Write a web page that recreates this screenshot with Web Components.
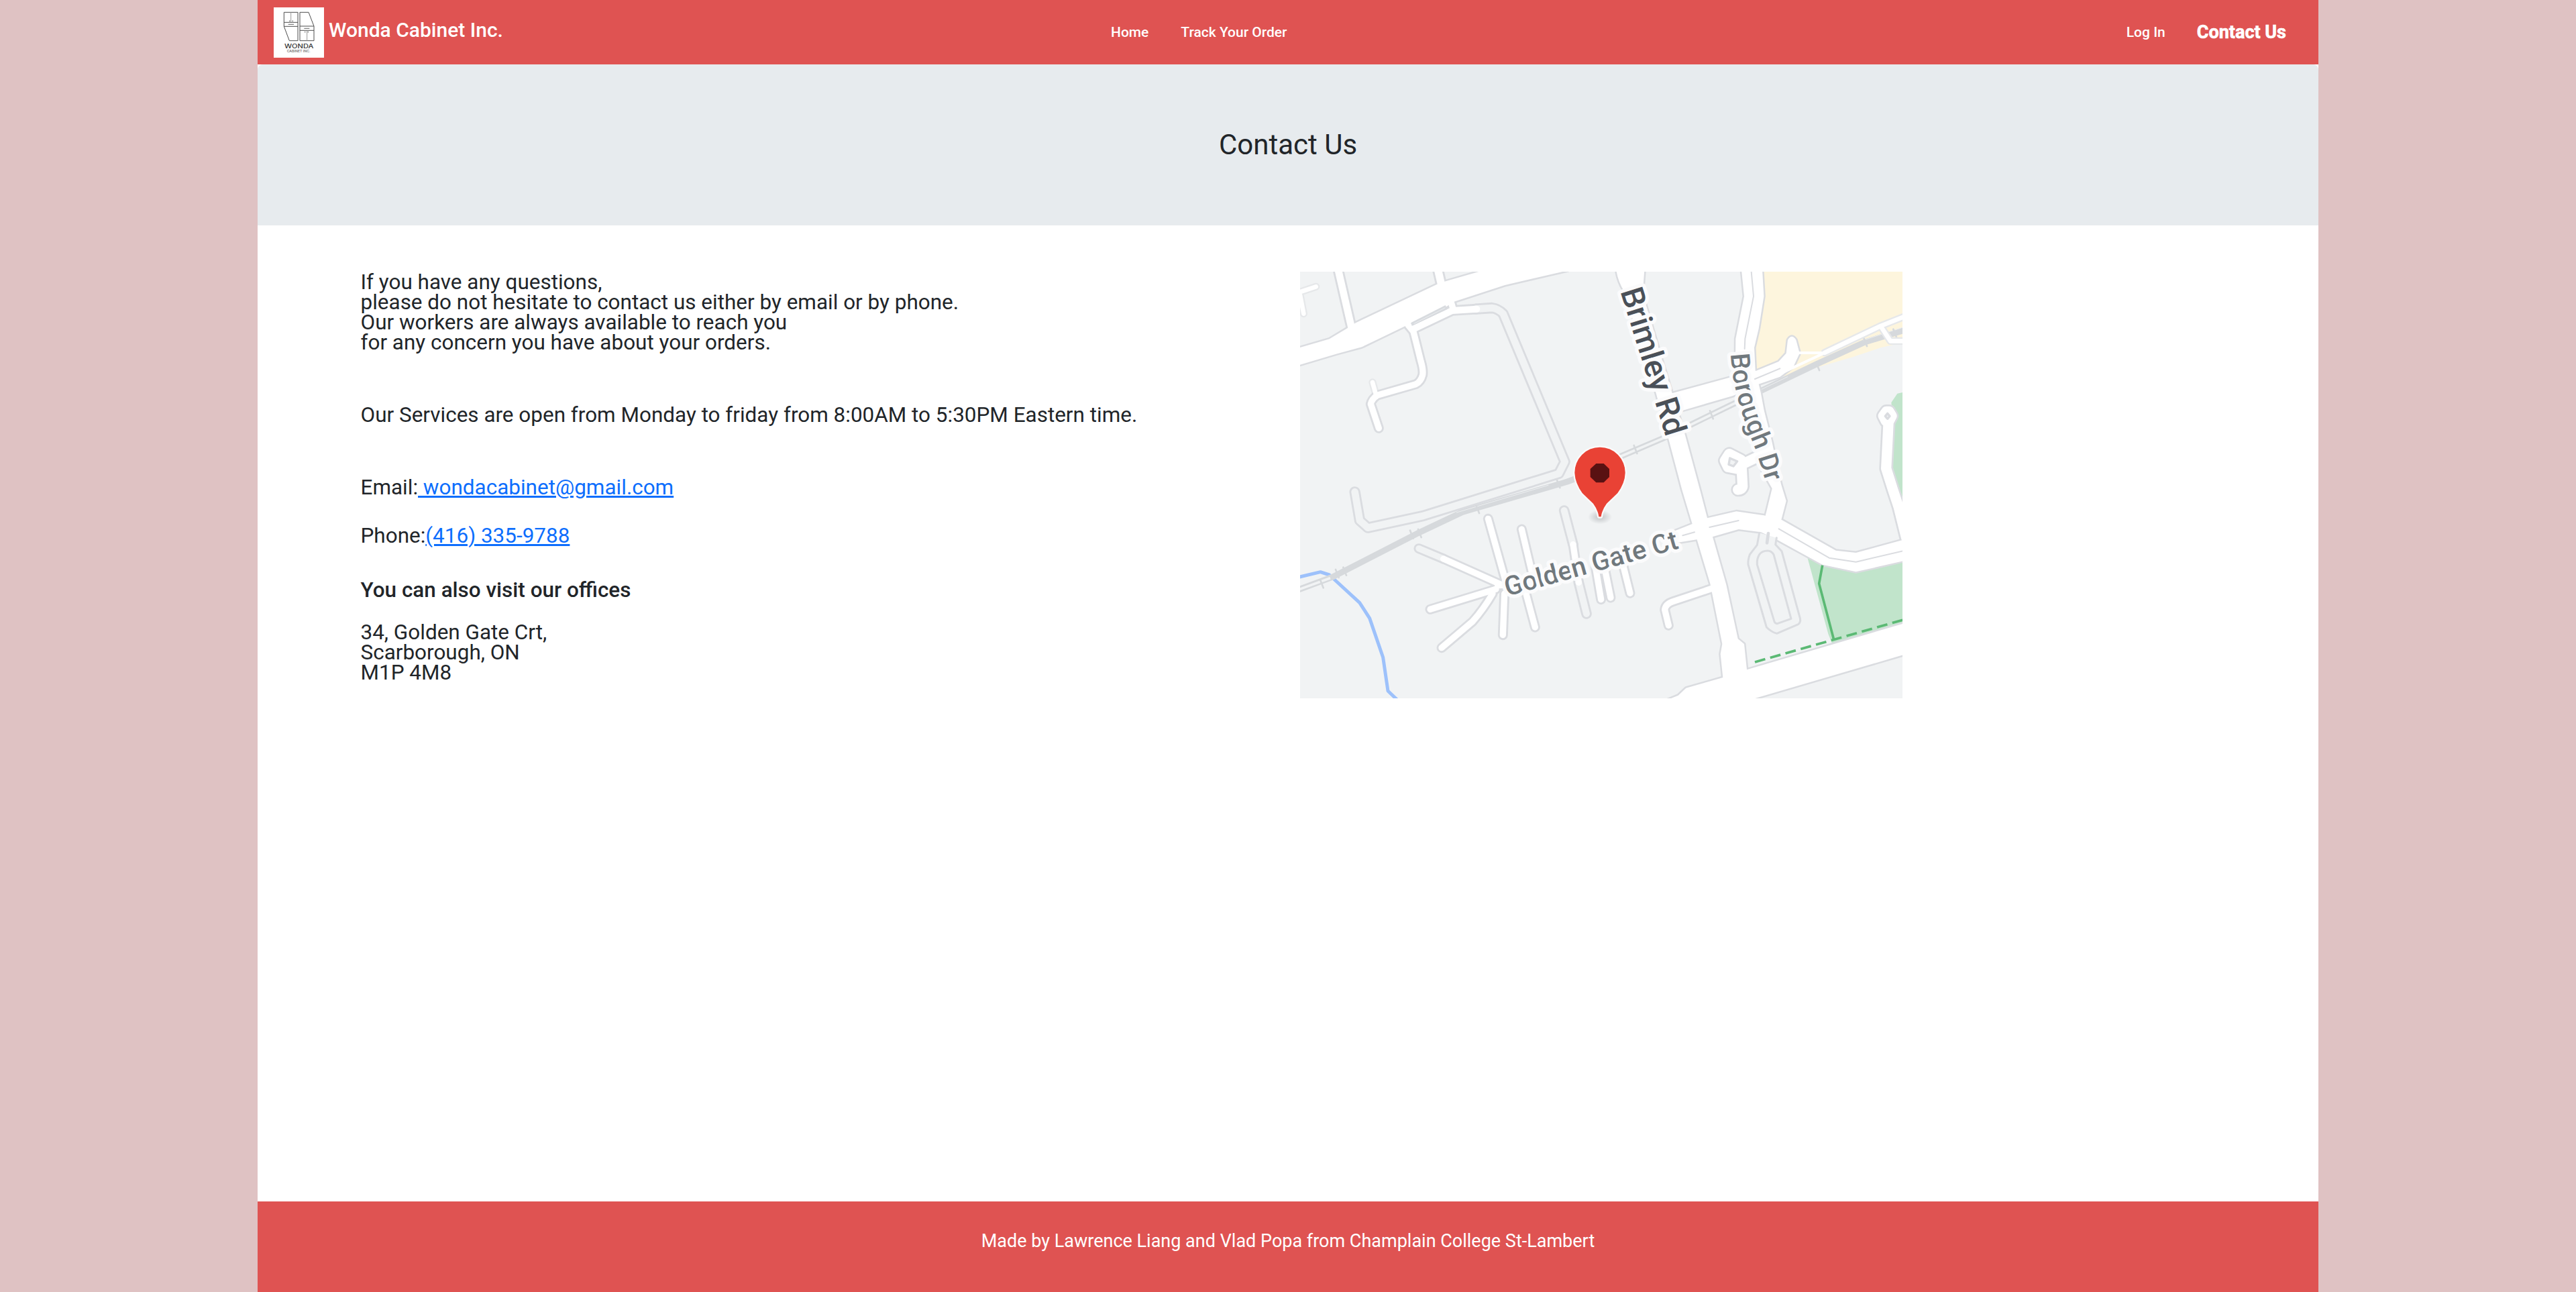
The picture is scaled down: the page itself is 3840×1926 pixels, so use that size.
<!DOCTYPE html>
<html lang="en">
<head>
<meta charset="utf-8">
<title>Contact Us - Wonda Cabinet Inc.</title>
<style>
html,body{margin:0;height:100%}
body{background:#dfc2c3;font-family:Roboto,sans-serif;color:#212529}
</style>
</head>
<body>
<contact-page></contact-page>
<script>
const define = (name, html, after) => customElements.define(name, class extends HTMLElement {
  constructor() {
    super();
    this.attachShadow({ mode: 'open' }).innerHTML = html;
    if (after) after(this.shadowRoot);
  }
});

define('wonda-logo', `
<style>:host{display:block;width:75px;height:75px;background:#fff}svg{display:block;width:100%;height:100%}text{font-family:Inter,sans-serif;fill:#333}</style>
<svg viewBox="0 0 225 225" fill="none" stroke="#4d4d4d" stroke-width="3">
<path d="M46 22H108V149H70L46 85ZM46 67H108M46 85H108"/>
<path d="M117 22H156L180 84V149H117ZM117 84H180M117 103H180"/>
<path stroke="#999" d="M77 22V67M149 103V149"/>
<path stroke="#666" d="M65 76H90M136 94H160"/>
<path stroke-width="4" d="M69 61h4M83 61h4M138 110h4M152 110h4"/>
<text x="48" y="183" font-size="25" font-weight="500" textLength="130" lengthAdjust="spacingAndGlyphs" stroke="none">WONDA</text>
<text x="59" y="202" font-size="13" textLength="105" lengthAdjust="spacingAndGlyphs" stroke="none" style="fill:#666">CABINET INC.</text>
</svg>`);

define('nav-link', `
<style>:host{display:block;font-size:21px;font-weight:500;line-height:30px;color:#fff;white-space:nowrap}
:host([active]){font-size:27px;font-weight:700;-webkit-text-stroke:.6px #fff}
a{color:inherit;text-decoration:none}</style><a><slot></slot></a>`);

define('site-header', `
<style>
:host{display:grid;grid-template-columns:1248px auto 1fr;height:96px;background:#df5352;color:#fff;box-sizing:border-box;padding:0 48px 0 24px}
.brand{display:flex;gap:7px;font-size:30px;font-weight:500;line-height:40px;padding-top:11px;white-space:nowrap}
.brand span{padding-top:14px}
nav{display:flex;gap:48px;padding-top:33px}
.end{justify-content:flex-end;gap:47px}
</style>
<div class="brand"><wonda-logo></wonda-logo><span>Wonda Cabinet Inc.</span></div>
<nav><nav-link>Home</nav-link><nav-link>Track Your Order</nav-link></nav>
<nav class="end"><nav-link>Log In</nav-link><nav-link active>Contact Us</nav-link></nav>`);

define('page-banner', `
<style>:host{display:flex;justify-content:center;align-items:center;height:240px;background:#e7ebee;border-radius:8px 8px 0 0}
h1{margin:0;font-size:42px;font-weight:400;line-height:50px}</style><h1><slot></slot></h1>`);

define('contact-info', `
<style>
:host{display:block;font-size:31.47px;line-height:30px;white-space:nowrap;padding-top:1px}
p,h2{margin:0;font-size:inherit;font-weight:400}
h2{font-weight:500;margin:51px 0 33px}
.hours{margin:78px 0}
.phone{margin-top:42px}
a{color:#0d6efd;text-decoration:underline}
</style>
<p>If you have any questions,<br>please do not hesitate to contact us either by email or by phone.<br>Our workers are always available to reach you<br>for any concern you have about your orders.</p>
<p class="hours">Our Services are open from Monday to friday from 8:00AM to 5:30PM Eastern time.</p>
<p>Email:<a href="#"> wondacabinet@gmail.com</a></p>
<p class="phone">Phone:<a href="#">(416) 335-9788</a></p>
<h2>You can also visit our offices</h2>
<p>34, Golden Gate Crt,<br>Scarborough, ON<br>M1P 4M8</p>`);

/* Streets: [path, inner width, fill] */
const W = '#ffffff', G = '#f1f3f4';
const streets = [
  ['M170,-10L230,250', 32, W],
  ['M616,-10L636,75', 34, W],
  ['M672,125L686,172', 28, W],
  ['M484,240L507,268L540,400Q552,440 548,462Q540,492 518,503L345,553Q320,570 316,592L352,700', 28, W],
  ['M786,167L858,162Q885,165 908,188L1184,850L1157,903L550,1092L303,1145L267,1113L245,985', 32, G],
  ['M505,257L680,174L790,167', 30, W],
  ['M531,1238L641,1284', 28, G],
  ['M641,1284L896,1398', 28, W],
  ['M582,1510L876,1420', 28, W],
  ['M633,1682L771,1565Q820,1510 861,1440', 28, W],
  ['M907,1625L914,1440', 28, W],
  ['M841,1105L918,1380', 28, W],
  ['M991,1152L1038,1350M1008,1430L1051,1590', 28, W],
  ['M1181,1068L1221,1220M1246,1390L1281,1530', 30, G],
  ['M1221,1220L1246,1390', 28, W],
  ['M1316,1290L1346,1466M1361,1320L1389,1458M1444,1310L1476,1438', 28, W],
  ['M1871,1407L1668,1475Q1634,1486 1631,1512L1648,1582', 28, W],
  ['M885,1402L940,1400', 30, W],
];
const shapes = [
  'M-20,345L131,301L214,251L246,230L616,55L651,43L820,-6L1200,-6L916,60L686,135L656,155L466,245L276,337L161,368L-20,422Z',
  'M1414,-8Q1420,40 1450,90L1591,540L1651,760L1708,975L1754,1128L1834,1395L1888,1665L1880,1710L1891,1815L1726,1862L1691,1895L1630,1920L1980,1924L2710,1710V1570L1998,1780L1986,1665L1958,1642L1906,1400L1821,1102L1788,975L1723,735L1620,400L1532,100L1540,-8Z',
  'M1600,560L1666,543L1916,475L2036,445L2140,402L2174,365L2181,305Q2199,275 2218,305L2234,365L2206,425L2146,470L2046,505L1936,555L1723,617L1640,640Z',
  'M1974,-8L1986,110L1948,300L1946,500L2000,700L2060,880L2111,970L2074,1120L2148,1125L2174,1025L2151,950L2110,760L2075,620L2060,540L2036,440L2031,340L2051,255L2074,110L2067,-8Z',
  'M1660,1165L1686,1155L1754,1128L1821,1102L1951,1072L2074,1090L2154,1110L2396,1247L2486,1257L2710,1196V1291L2486,1342L2336,1310L2126,1195L2061,1165L1961,1152L1846,1185L1773,1198L1690,1211Z'
];
const ring = 'M1919,815L1972,842L1957,882L1914,874L1900,845ZM1974,863L2080,812M1974,865L1979,960Q1976,975 1958,975M2622,625H2634L2646,645L2634,668H2620L2608,645ZM2631,680L2621,880L2651,975L2676,1050L2711,1190';
const tick = (x, y) => `M${x - 7},${y - 18}L${x + 7},${y + 18}`;

define('office-map', `
<style>
:host{display:block;width:898px;height:636px;background:#f1f3f4}
svg{display:block;width:100%;height:100%}
text{font-family:Roboto,sans-serif;font-weight:500;paint-order:stroke;stroke:#fbfbfc;stroke-width:32px;stroke-linejoin:round}
</style>
<svg viewBox="0 0 2694 1908" fill="none" stroke-linejoin="round" stroke-linecap="round">
<defs><radialGradient id="sh"><stop offset=".2" stop-color="#c9ccce"/><stop offset="1" stop-color="#c9ccce" stop-opacity="0"/></radialGradient></defs>
<path fill="#fdf5dd" d="M2070,0H2694V318L2596,340L2476,380L2186,465L2034,480L2030,340L2051,255L2076,110Z"/>
<path fill="#c1e4cb" d="M2694,540L2671,545L2644,585L2650,655L2646,900L2694,1045ZM2268,1275L2336,1310L2486,1330L2694,1280V1580L2379,1662L2362,1620Z"/>
<path stroke="#9dc1fb" stroke-width="15" d="M-10,1367L91,1343L131,1356L266,1480L311,1550L371,1725L393,1875L440,1920"/>
<g class="rail">
<path stroke="#d6d9dc" stroke-width="27" d="M-10,1423L146,1365L536,1165L726,1075L1176,945Q1250,925 1436,825L1616,748L1746,685L1941,590L2046,540L2306,415L2526,315L2700,262"/>
<path stroke="#f1f3f4" stroke-width="11" stroke-linecap="butt" d="M-10,1423L135,1370M1240,925L1436,825L1616,748L1746,685L1941,590L2046,540"/>
<path stroke="#eceef0" stroke-width="3" d="M700,1077L1110,955M2046,535L2180,470M2520,306L2700,248"/>
<path stroke="#d6d9dc" stroke-width="8" d="${[[97, 1396], [166, 1350], [200, 1340], [499, 1175], [535, 1170], [794, 1062], [1155, 948], [1500, 795], [1840, 640], [2315, 423], [2528, 315], [2660, 275]].map(p => tick(...p)).join('')}"/>
</g>
<g stroke="#e6e8ea" stroke-width="34"><path d="M-10,94L71,67M0,105L16,188M324,495L338,545M2346,362L2596,243L2704,200M2596,243L2640,310H2700"/></g>
<g class="casing"></g>
<path stroke="#dadce0" stroke-width="62" d="${ring}"/>
<g stroke="#dadce0" stroke-width="15">${shapes.map(d => `<path d="${d}"/>`).join('')}</g>
<g class="fill"></g>
<path stroke="#fff" stroke-width="20" d="M-10,94L71,67M0,105L16,188M324,495L342,560M2346,362L2596,243L2704,200M2596,243L2640,310H2700"/>
<path stroke="#fff" stroke-width="12" d="M2220,363H2346L2170,445"/>
<path stroke="#fff" stroke-width="46" d="${ring}"/>
<path fill="#f1f3f4" stroke="#dadce0" stroke-width="10" d="M1922,834L1955,848L1938,870L1917,862ZM2627,634L2637,646L2627,658L2617,646Z"/>
<g fill="#fff">${shapes.map(d => `<path d="${d}"/>`).join('')}</g>
<path fill="#d8dbdf" d="M496,228L650,150L658,168L500,242Z"/>
<path stroke="#eceef0" stroke-width="3" d="M510,232L648,162"/>
<path stroke="#dadce0" stroke-width="6" d="M2018,0L2028,110L1990,300L1988,345M2034,480L2146,433M1711,1180L1764,1165M1831,1143L1961,1113M2141,1150L2366,1280L2486,1298L2700,1248"/>
<g stroke="#dadce0" stroke-width="9">
<path fill="#f1f3f4" d="M2054,1168L2044,1222L2011,1265Q2002,1290 2004,1310L2086,1590Q2108,1612 2132,1618L2228,1577Q2240,1568 2236,1550L2154,1250L2126,1220L2131,1190"/>
<path fill="#f1f3f4" d="M2044,1310L2121,1565Q2126,1574 2134,1574L2196,1552L2118,1265Q2107,1248 2091,1248Q2066,1248 2054,1265Q2042,1283 2044,1310Z"/>
<path stroke-width="14" d="M2094,1170L2088,1213"/>
</g>
<path stroke="#5bb974" stroke-width="11" stroke-linecap="butt" stroke-linejoin="miter" d="M2336,1313L2321,1395L2386,1642"/>
<path stroke="#5bb974" stroke-width="11" stroke-linecap="butt" stroke-dasharray="48 23" d="M2034,1746L2700,1556"/>
<text fill="#4a5058" font-size="141" textLength="684" transform="translate(1432,88) rotate(72.6)">Brimley Rd</text>
<path id="dr" d="M1926,368C1934,525 1982,660 2037,795L2105,1010"/>
<text fill="#70787d" font-size="118.5"><textPath href="#dr">Borough Dr</textPath></text>
<text fill="#70787d" font-size="119" textLength="801" transform="translate(926,1452) rotate(-15.6)">Golden Gate Ct</text>
<ellipse cx="1341" cy="1097" rx="54" ry="32" fill="url(#sh)"/>
<path fill="#e94235" stroke="#fafafa" stroke-width="14" paint-order="stroke" d="M1341,785A113,113 0 0 0 1228,900Q1230,945 1262,990L1311,1037Q1332,1065 1336,1096H1346Q1350,1065 1371,1037L1420,990Q1453,945 1454,900A113,113 0 0 0 1341,785Z"/>
<path fill="#591112" d="M1324,858H1358L1383,882V918L1358,943H1324L1298,918V882Z"/>
</svg>`, root => {
  const draw = (d, w, c) => `<path d="${d}" stroke-width="${w}" stroke="${c}"/>`;
  root.querySelector('.casing').innerHTML = streets.map(([d, w]) => draw(d, w + 17, '#dadce0')).join('');
  root.querySelector('.fill').innerHTML =
    streets.filter(s => s[2] === G).concat(streets.filter(s => s[2] === W)).map(([d, w, c]) => draw(d, w, c)).join('');
});

define('site-footer', `
<style>:host{display:flex;justify-content:center;height:135px;box-sizing:border-box;padding-top:42px;background:#df5352;color:#fff;font-size:27px;line-height:34px}</style>
<span><slot></slot></span>`);

define('contact-page', `
<style>
:host{display:flex;flex-direction:column;width:3072px;height:1926px;margin:0 auto;background:#fff}
main{flex:1;display:grid;grid-template-columns:1400px 898px;align-content:start;padding:69px 0 0 154px}
contact-info{margin-left:-.5px}
</style>
<site-header></site-header>
<page-banner>Contact Us</page-banner>
<main><contact-info></contact-info><office-map></office-map></main>
<site-footer>Made by Lawrence Liang and Vlad Popa from Champlain College St-Lambert</site-footer>`);
</script>
</body>
</html>
